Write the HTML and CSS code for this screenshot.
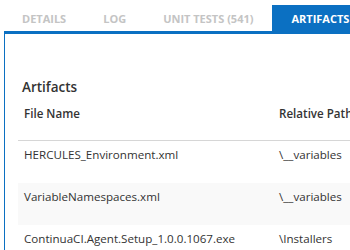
FILE: index.html
```html
<!DOCTYPE html>
<html lang="en">
<head>
  <meta charset="UTF-8" />
  <title>Build Artifacts</title>
  <link rel="stylesheet" href="styles.css">
</head>
<body>
  <nav class="tabs">
    <a class="tab">Details</a>
    <a class="tab">Log</a>
    <a class="tab">Unit Tests (541)</a>
    <a class="tab active">Artifacts</a>
  </nav>
  <section class="panel">
    <h2>Artifacts</h2>
    <table class="artifacts">
      <thead>
        <tr>
          <th class="col-name">File Name</th>
          <th class="col-path">Relative Path</th>
        </tr>
      </thead>
      <tbody>
        <tr>
          <td>HERCULES_Environment.xml</td>
          <td>\__variables</td>
        </tr>
        <tr>
          <td>VariableNamespaces.xml</td>
          <td>\__variables</td>
        </tr>
        <tr>
          <td>ContinuaCI.Agent.Setup_1.0.0.1067.exe</td>
          <td>\Installers</td>
        </tr>
      </tbody>
    </table>
  </section>
</body>
</html>
```

FILE: styles.css
```css
html, body {
  overflow: hidden;
}
body {
  font-family: 'Open Sans', 'Noto Sans', sans-serif;
  background-color: white;
  margin: 0;
  padding: 5px 0 0 4px;
  color: #333;
  width: 346px;
  height: 245px;
}
.tabs {
  display: flex;
  white-space: nowrap;
  height: 26px;
}
.tab {
  display: flex;
  align-items: center;
  padding: 0 19px 0 18px;
  font-size: 11px;
  font-weight: bold;
  text-transform: uppercase;
  color: #c4c4c4;
}
.tab.active {
  background-color: #0b70c2;
  color: white;
  padding-left: 19px;
}
.panel {
  border-top: 3px solid #0b70c2;
  border-left: 1px solid #0b70c2;
  padding: 0 0 0 13px;
  height: 300px;
}
.panel h2 {
  font-size: 13.5px;
  font-weight: 600;
  margin: 0;
  padding: 43px 0 0 4px;
  line-height: 20px;
  color: #333;
}
.artifacts {
  border-collapse: collapse;
  table-layout: fixed;
  width: 400px;
  font-size: 11.6px;
}
.artifacts th {
  box-sizing: border-box;
  text-align: left;
  font-weight: 600;
  padding: 9px 6px 19px;
  border-bottom: 1px solid #d6d6d6;
  white-space: nowrap;
}
.artifacts .col-name {
  width: 255px;
}
.artifacts .col-path {
  width: 145px;
}
.artifacts tbody tr {
  height: 42px;
}
.artifacts td {
  vertical-align: top;
  padding: 6px 6px 0;
  white-space: nowrap;
}
.artifacts tbody tr:nth-child(even) {
  background-color: #f9f9f9;
}
```
